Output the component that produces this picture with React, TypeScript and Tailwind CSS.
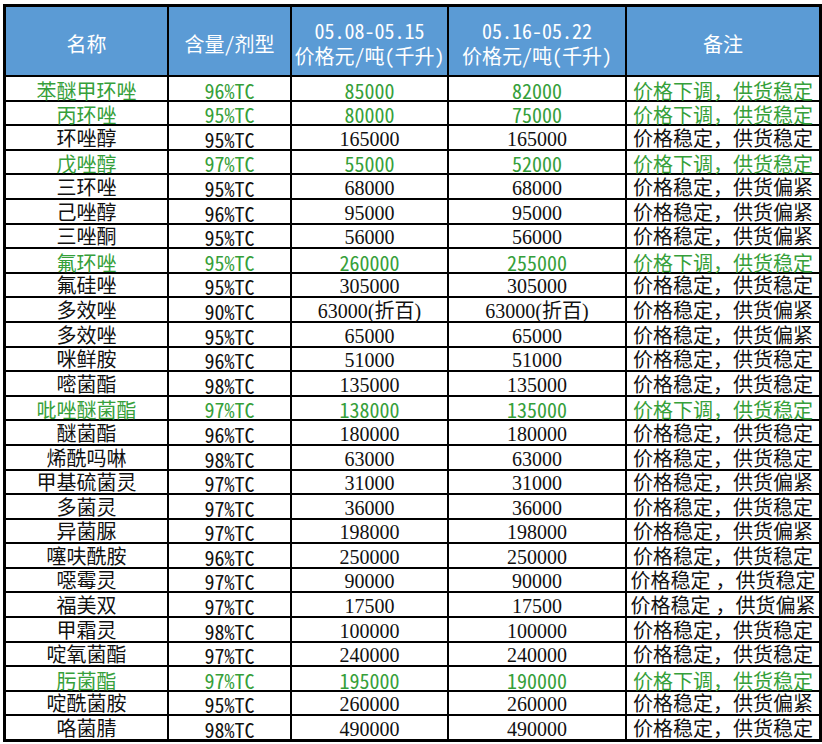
import React from "react";

type Row = {
  name: string;
  spec: string;
  p1: string;
  p2: string;
  note: string;
  down?: boolean;
};

const rows: Row[] = [
  { name: "苯醚甲环唑", spec: "96%TC", p1: "85000", p2: "82000", note: "价格下调，供货稳定", down: true },
  { name: "丙环唑", spec: "95%TC", p1: "80000", p2: "75000", note: "价格下调，供货稳定", down: true },
  { name: "环唑醇", spec: "95%TC", p1: "165000", p2: "165000", note: "价格稳定，供货稳定" },
  { name: "戊唑醇", spec: "97%TC", p1: "55000", p2: "52000", note: "价格下调，供货稳定", down: true },
  { name: "三环唑", spec: "95%TC", p1: "68000", p2: "68000", note: "价格稳定，供货偏紧" },
  { name: "己唑醇", spec: "96%TC", p1: "95000", p2: "95000", note: "价格稳定，供货偏紧" },
  { name: "三唑酮", spec: "95%TC", p1: "56000", p2: "56000", note: "价格稳定，供货偏紧" },
  { name: "氟环唑", spec: "95%TC", p1: "260000", p2: "255000", note: "价格下调，供货稳定", down: true },
  { name: "氟硅唑", spec: "95%TC", p1: "305000", p2: "305000", note: "价格稳定，供货稳定" },
  { name: "多效唑", spec: "90%TC", p1: "63000(折百)", p2: "63000(折百)", note: "价格稳定，供货偏紧" },
  { name: "多效唑", spec: "95%TC", p1: "65000", p2: "65000", note: "价格稳定，供货偏紧" },
  { name: "咪鲜胺", spec: "96%TC", p1: "51000", p2: "51000", note: "价格稳定，供货稳定" },
  { name: "嘧菌酯", spec: "98%TC", p1: "135000", p2: "135000", note: "价格稳定，供货稳定" },
  { name: "吡唑醚菌酯", spec: "97%TC", p1: "138000", p2: "135000", note: "价格下调，供货稳定", down: true },
  { name: "醚菌酯", spec: "96%TC", p1: "180000", p2: "180000", note: "价格稳定，供货稳定" },
  { name: "烯酰吗啉", spec: "98%TC", p1: "63000", p2: "63000", note: "价格稳定，供货稳定" },
  { name: "甲基硫菌灵", spec: "97%TC", p1: "31000", p2: "31000", note: "价格稳定，供货偏紧" },
  { name: "多菌灵", spec: "97%TC", p1: "36000", p2: "36000", note: "价格稳定，供货稳定" },
  { name: "异菌脲", spec: "97%TC", p1: "198000", p2: "198000", note: "价格稳定，供货偏紧" },
  { name: "噻呋酰胺", spec: "96%TC", p1: "250000", p2: "250000", note: "价格稳定，供货稳定" },
  { name: "噁霉灵", spec: "97%TC", p1: "90000", p2: "90000", note: "价格稳定 ，供货稳定" },
  { name: "福美双", spec: "97%TC", p1: "17500", p2: "17500", note: "价格稳定 ，供货偏紧" },
  { name: "甲霜灵", spec: "98%TC", p1: "100000", p2: "100000", note: "价格稳定，供货稳定" },
  { name: "啶氧菌酯", spec: "97%TC", p1: "240000", p2: "240000", note: "价格稳定，供货稳定" },
  { name: "肟菌酯", spec: "97%TC", p1: "195000", p2: "190000", note: "价格下调，供货稳定", down: true },
  { name: "啶酰菌胺", spec: "95%TC", p1: "260000", p2: "260000", note: "价格稳定，供货偏紧" },
  { name: "咯菌腈", spec: "98%TC", p1: "490000", p2: "490000", note: "价格稳定，供货稳定" },
];

// half-width latin in the CJK sans, like the sheet's ascii cells
const sans = "font-['Noto_Sans_CJK_SC','Noto_Sans',sans-serif]";
const sansHw = "font-['Noto_Sans_CJK_SC','Noto_Sans',sans-serif] [font-feature-settings:'hwid']";
const serif = "font-['Liberation_Serif','Noto_Sans_CJK_SC',serif]";

function Cell({ children, green, font }: { children: React.ReactNode; green?: boolean; font: string }) {
  return (
    <div
      className={`bg-white flex items-end justify-center whitespace-nowrap text-[20px] leading-[21px] ${font} ${
        green ? "text-[#36a03a]" : "text-[#111]"
      }`}
    >
      <span className="relative top-[1px]">{children}</span>
    </div>
  );
}

function Head({ children }: { children: React.ReactNode }) {
  return (
    <div className={`bg-[#5b9bd5] text-white flex flex-col items-center justify-center text-[20px] leading-[25px] pt-[4px] ${sansHw}`}>
      {children}
    </div>
  );
}

export default function App() {
  return (
    <div className="w-[822px] h-[744px] bg-white overflow-hidden pt-[4px] pl-[3px]">
      <div className="w-[819px] grid grid-cols-[161px_121px_155px_176px_192px] grid-rows-[68px_repeat(27,22.6px)] gap-[2px] bg-black border-[3px] border-black">
        <Head>名称</Head>
        <Head>含量/剂型</Head>
        <Head>
          <span>05.08-05.15</span>
          <span>价格元/吨(千升)</span>
        </Head>
        <Head>
          <span>05.16-05.22</span>
          <span>价格元/吨(千升)</span>
        </Head>
        <Head>备注</Head>

        {rows.map((r, i) => (
          <React.Fragment key={i}>
            <Cell green={r.down} font={r.down ? sans : serif}>{r.name}</Cell>
            <Cell green={r.down} font={sansHw}>{r.spec}</Cell>
            <Cell green={r.down} font={r.down ? sansHw : serif}>{r.p1}</Cell>
            <Cell green={r.down} font={r.down ? sansHw : serif}>{r.p2}</Cell>
            <Cell green={r.down} font={r.down ? sans : serif}>{r.note}</Cell>
          </React.Fragment>
        ))}
      </div>
    </div>
  );
}
